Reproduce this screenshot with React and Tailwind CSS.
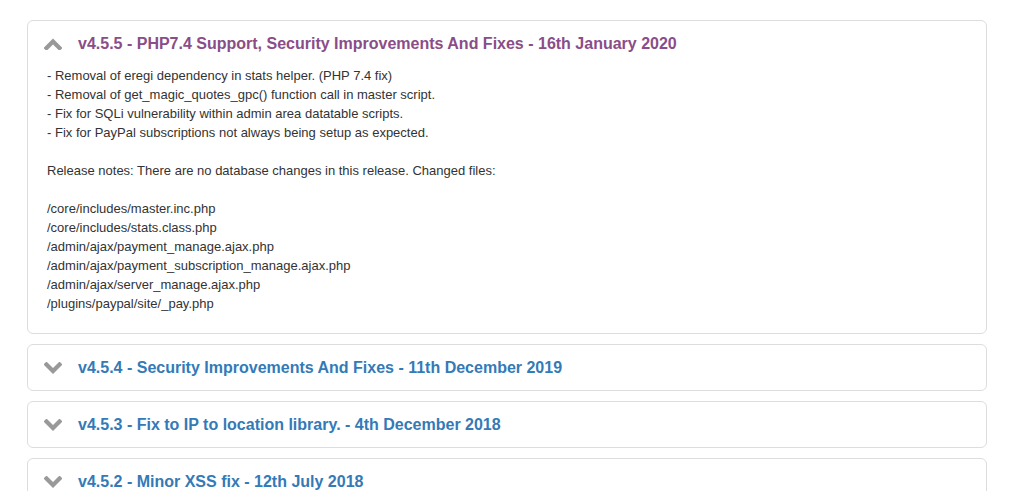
import { useState } from 'react';

const releases = [
  {
    title: 'v4.5.5 - PHP7.4 Support, Security Improvements And Fixes - 16th January 2020',
    lines: [
      '- Removal of eregi dependency in stats helper. (PHP 7.4 fix)',
      '- Removal of get_magic_quotes_gpc() function call in master script.',
      '- Fix for SQLi vulnerability within admin area datatable scripts.',
      '- Fix for PayPal subscriptions not always being setup as expected.',
      '',
      'Release notes: There are no database changes in this release. Changed files:',
      '',
      '/core/includes/master.inc.php',
      '/core/includes/stats.class.php',
      '/admin/ajax/payment_manage.ajax.php',
      '/admin/ajax/payment_subscription_manage.ajax.php',
      '/admin/ajax/server_manage.ajax.php',
      '/plugins/paypal/site/_pay.php',
    ],
  },
  { title: 'v4.5.4 - Security Improvements And Fixes - 11th December 2019', lines: [] },
  { title: 'v4.5.3 - Fix to IP to location library. - 4th December 2018', lines: [] },
  { title: 'v4.5.2 - Minor XSS fix - 12th July 2018', lines: [] },
];

const Chevron = ({ up }) => (
  <svg width="18" height="12" viewBox="0 0 18 12" className="shrink-0">
    <path
      d={up ? 'M2.5 10 L9 3.5 L15.5 10' : 'M2.5 2.5 L9 9 L15.5 2.5'}
      fill="none"
      stroke="#999999"
      strokeWidth="4.2"
      strokeLinecap="square"
      strokeLinejoin="miter"
    />
  </svg>
);

export default function App() {
  const [open, setOpen] = useState(0);

  return (
    <div className="bg-white min-h-screen pt-5 pl-[27px] pr-[30px] font-['Liberation_Sans',Arial,sans-serif]">
      <div className="flex flex-col gap-[10px] w-[960px]">
        {releases.map((r, i) => (
          <div key={r.title} className="border border-[#dddddd] rounded-[6px] bg-white">
            <button
              onClick={() => setOpen(open === i ? -1 : i)}
              className="w-full flex items-center h-[45px] pl-[16px] pt-[1px] text-left"
            >
              <Chevron up={open === i} />
              <span
                className={`ml-[16px] text-[16px] leading-[20px] font-bold ${
                  open === i ? 'text-[#8a4d88]' : 'text-[#337ab7]'
                }`}
              >
                {r.title}
              </span>
            </button>
            {open === i && (
              <div className="px-[19px] pb-[20px] text-[13px] leading-[19px] text-[#333333]">
                {r.lines.map((l, k) => (
                  <div key={k} className="h-[19px]">{l}</div>
                ))}
              </div>
            )}
          </div>
        ))}
      </div>
    </div>
  );
}
